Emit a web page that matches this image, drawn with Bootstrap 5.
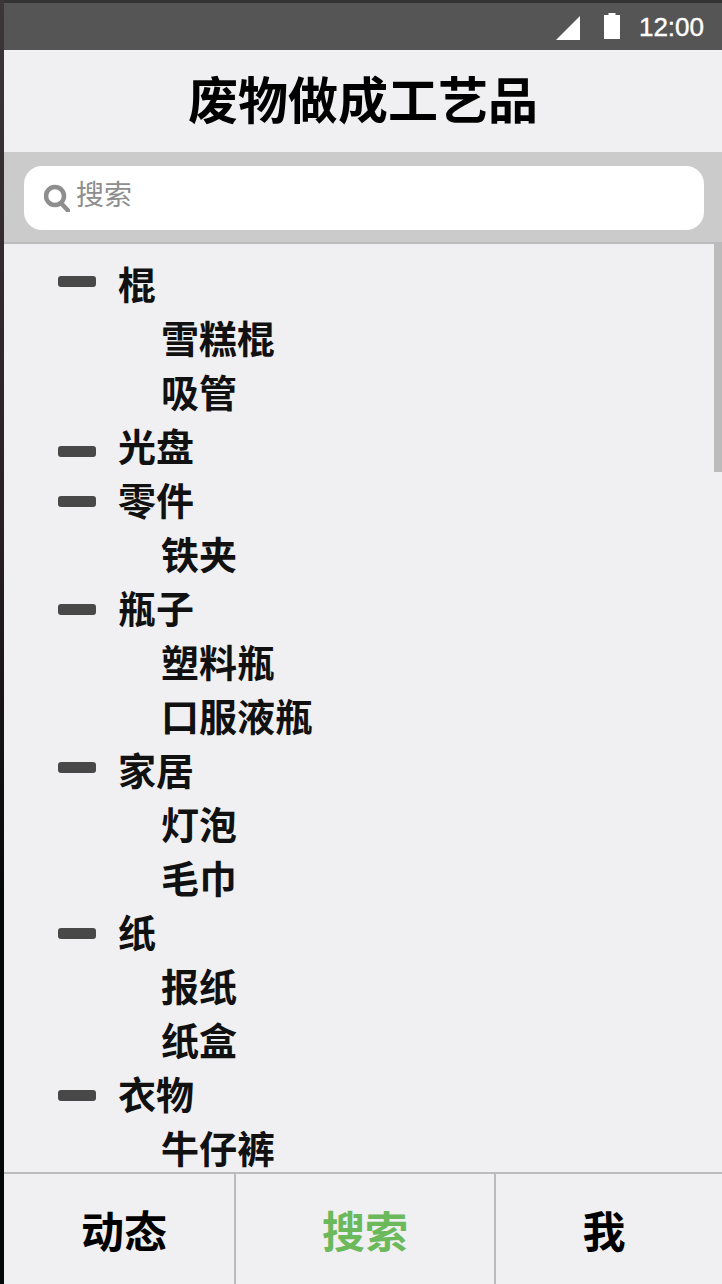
<!DOCTYPE html>
<html lang="zh-CN">
<head>
    <meta charset="UTF-8">
    <meta name="viewport" content="width=device-width, initial-scale=1">
    <title>废物做成工艺品</title>
    <link href="https://cdn.jsdelivr.net/npm/bootstrap@5.3.0/dist/css/bootstrap.min.css" rel="stylesheet">
    <style>
        html, body { height: 100%; overflow: hidden; }
        body {
            background: #f0f0f2;
            font-family: "Liberation Sans", "Noto Sans CJK SC", sans-serif;
            color: #111;
        }
        .screen { height: 1284px; border-left: 4px solid; border-image: linear-gradient(#3c3639, #2a2024 40%, #050808 70%) 1; }
        .status-bar { height: 50px; background: #555; border-top: 3px solid #333; padding-right: 18px; }
        .status-time { color: #fff; font-size: 26px; line-height: 1; -webkit-text-stroke: .4px #fff; }
        .signal-icon { margin-right: 24px; margin-top: 3px; }
        .battery-icon { margin-right: 19px; margin-bottom: 2px; }
        .app-title { height: 102px; margin: 0; padding-top: 2px; font-size: 50px; font-weight: 700; color: #000; }
        .search-wrap { height: 92px; background: #cbcbcb; border-bottom: 2px solid #bbb; padding: 14px 18px 0 20px; }
        .search-field { height: 64px; background: #fff; border-radius: 18px; padding-left: 20px; padding-bottom: 4px; color: #8e8e8e; font-size: 28px; }
        .search-label { margin-left: -2px; }
        .tree-area { overflow: hidden; min-height: 0; }
        .tree-scroll { position: absolute; top: 0; right: 0; width: 8px; height: 228px; background: #bbb; }
        .tree-list { padding-top: 15px; }
        .tree-row { height: 54px; font-size: 38px; line-height: 54px; font-weight: 700; white-space: nowrap; }
        .tree-dash { width: 38px; height: 11px; background: #484848; border-radius: 3px; margin-left: 54px; margin-right: 22px; }
        .tree-child { padding-left: 157px; }
        .tab-bar { height: 112px; border-top: 2px solid #bbb; flex-shrink: 0; }
        .tab-cell { font-size: 43px; font-weight: 700; color: #000; padding-top: 8px; }
        .tab-first { width: 230px; padding-left: 10px; }
        .tab-mid { width: 262px; border-left: 2px solid #bbb; border-right: 2px solid #bbb; }
        .tab-last { padding-right: 10px; }
        .tab-active { color: #6cb95c; }
    </style>
</head>
<body>
    <div class="screen d-flex flex-column">
        <div class="status-bar d-flex align-items-center justify-content-end flex-shrink-0">
            <svg class="signal-icon" width="24" height="24" viewBox="0 0 24 24"><path d="M0 24 L24 0 V24 Z" fill="#fff"/></svg>
            <svg class="battery-icon" width="16" height="26" viewBox="0 0 16 26"><path d="M4.5 0 H11.5 V2 H16 V26 H0 V2 H4.5 Z" fill="#fff"/></svg>
            <span class="status-time">12:00</span>
        </div>

        <h1 class="app-title d-flex align-items-center justify-content-center flex-shrink-0">废物做成工艺品</h1>

        <div class="search-wrap flex-shrink-0">
            <div class="search-field d-flex align-items-center gap-2">
                <svg width="26" height="28" viewBox="0 0 26 28" class="mt-1"><circle cx="11" cy="12" r="9" fill="none" stroke="#8e8e8e" stroke-width="4.5"/><path d="M17 19 L24 26.5" stroke="#8e8e8e" stroke-width="4.5" stroke-linecap="round"/></svg>
                <span class="search-label">搜索</span>
            </div>
        </div>

        <div class="tree-area flex-grow-1 position-relative">
            <div class="tree-scroll"></div>
            <div class="tree-list" id="tree"></div>
        </div>

        <div class="tab-bar d-flex">
            <div class="tab-cell tab-first d-flex align-items-center justify-content-center">动态</div>
            <div class="tab-cell tab-mid tab-active d-flex align-items-center justify-content-center">搜索</div>
            <div class="tab-cell tab-last flex-grow-1 d-flex align-items-center justify-content-center">我</div>
        </div>
    </div>

    <script src="https://cdn.jsdelivr.net/npm/bootstrap@5.3.0/dist/js/bootstrap.bundle.min.js"></script>
    <script>
        // dash offset differs per row in the reference
        const items = [
            ['棍', -5, ['雪糕棍', '吸管']],
            ['光盘', 3, []],
            ['零件', -1, ['铁夹']],
            ['瓶子', -1, ['塑料瓶', '口服液瓶']],
            ['家居', -5, ['灯泡', '毛巾']],
            ['纸', -1, ['报纸', '纸盒']],
            ['衣物', -1, ['牛仔裤']]
        ];
        let html = '';
        items.forEach(function (group) {
            html += '<div class="tree-row d-flex align-items-center"><span class="tree-dash" style="transform: translateY(' + group[1] + 'px)"></span><span>' + group[0] + '</span></div>';
            group[2].forEach(function (child) {
                html += '<div class="tree-row tree-child">' + child + '</div>';
            });
        });
        document.getElementById('tree').innerHTML = html;
    </script>
</body>
</html>
